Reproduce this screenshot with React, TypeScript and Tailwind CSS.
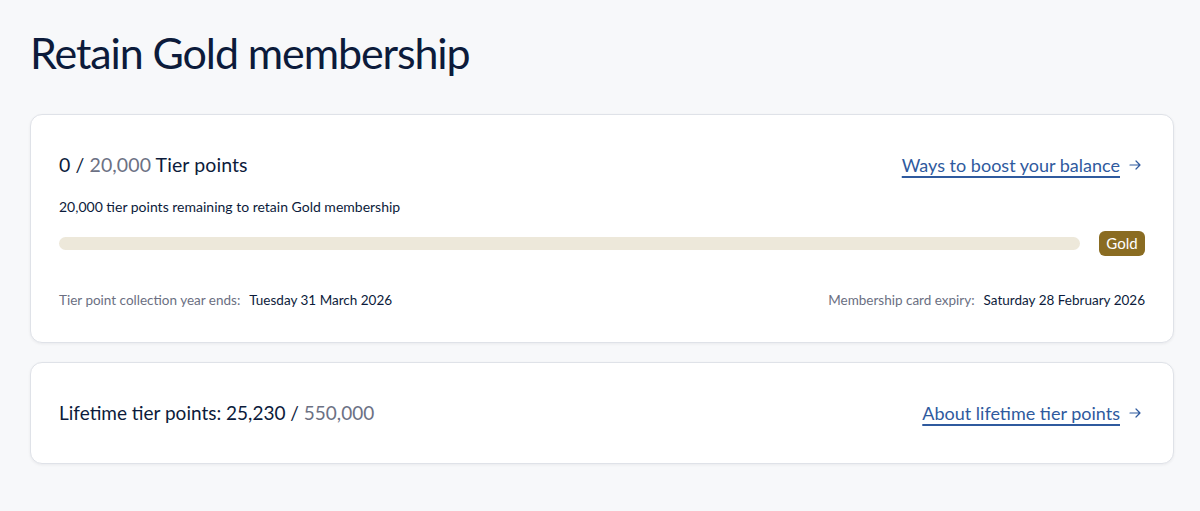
import React from "react";

const font = { fontFamily: "Lato, 'Open Sans', 'Noto Sans', sans-serif" };

function ArrowLink({ children }: { children: React.ReactNode }) {
  return (
    <a href="#" className="flex items-center gap-[9px] text-[18px] text-[#2f5a9e] leading-none">
      <span className="underline decoration-[1.5px] underline-offset-[4px]">{children}</span>
      <svg width="12" height="10" viewBox="0 0 12 10" fill="none" stroke="#2f5a9e" strokeWidth="1.2" strokeLinecap="round" strokeLinejoin="round">
        <path d="M1 5h10M7 1l4 4-4 4" />
      </svg>
    </a>
  );
}

export default function App() {
  return (
    <div style={font} className="min-h-[511px] w-full bg-[#f7f8fa] pl-[30px] pr-[26px] pt-[25px] text-[#0c1b3b]">
      <h1 className="text-[43px] leading-[55px] font-normal tracking-[-1.1px]">Retain Gold membership</h1>

      <section className="mt-[34px] rounded-[12px] border border-[#dfe2e8] bg-white px-[28px] pt-[37px] pb-[33px] shadow-[0_1px_3px_rgba(16,24,40,0.06)]">
        <div className="flex items-center justify-between">
          <div className="text-[19.5px] leading-[26px] tracking-[0.1px]">
            0 / <span className="text-[#6c7184]">20,000</span> Tier points
          </div>
          <div className="mr-[4px]">
            <ArrowLink>Ways to boost your balance</ArrowLink>
          </div>
        </div>
        <p className="mt-[20px] text-[14px] leading-[18px]">20,000 tier points remaining to retain Gold membership</p>
        <div className="mt-[15px] flex items-center gap-[19px]">
          <div className="h-[13px] flex-1 rounded-full bg-[#ede8da]" />
          <span className="flex h-[25px] w-[46px] items-center justify-center rounded-[6px] bg-[#8a6c22] text-[15px] leading-none text-white">Gold</span>
        </div>
        <div className="mt-[35px] flex items-center justify-between text-[13.5px] leading-[18px]">
          <div>
            <span className="text-[#6b6f82]">Tier point collection year ends:</span>
            <span className="ml-[9px]">Tuesday 31 March 2026</span>
          </div>
          <div>
            <span className="text-[#6b6f82]">Membership card expiry:</span>
            <span className="ml-[9px]">Saturday 28 February 2026</span>
          </div>
        </div>
      </section>

      <section className="mt-[19px] flex h-[102px] items-center justify-between rounded-[12px] border border-[#dfe2e8] bg-white px-[28px] shadow-[0_1px_3px_rgba(16,24,40,0.06)]">
        <div className="text-[19px] leading-[26px]">
          Lifetime tier points: 25,230 / <span className="text-[#6c7184]">550,000</span>
        </div>
        <div className="mr-[4px]">
          <ArrowLink>About lifetime tier points</ArrowLink>
        </div>
      </section>
    </div>
  );
}
